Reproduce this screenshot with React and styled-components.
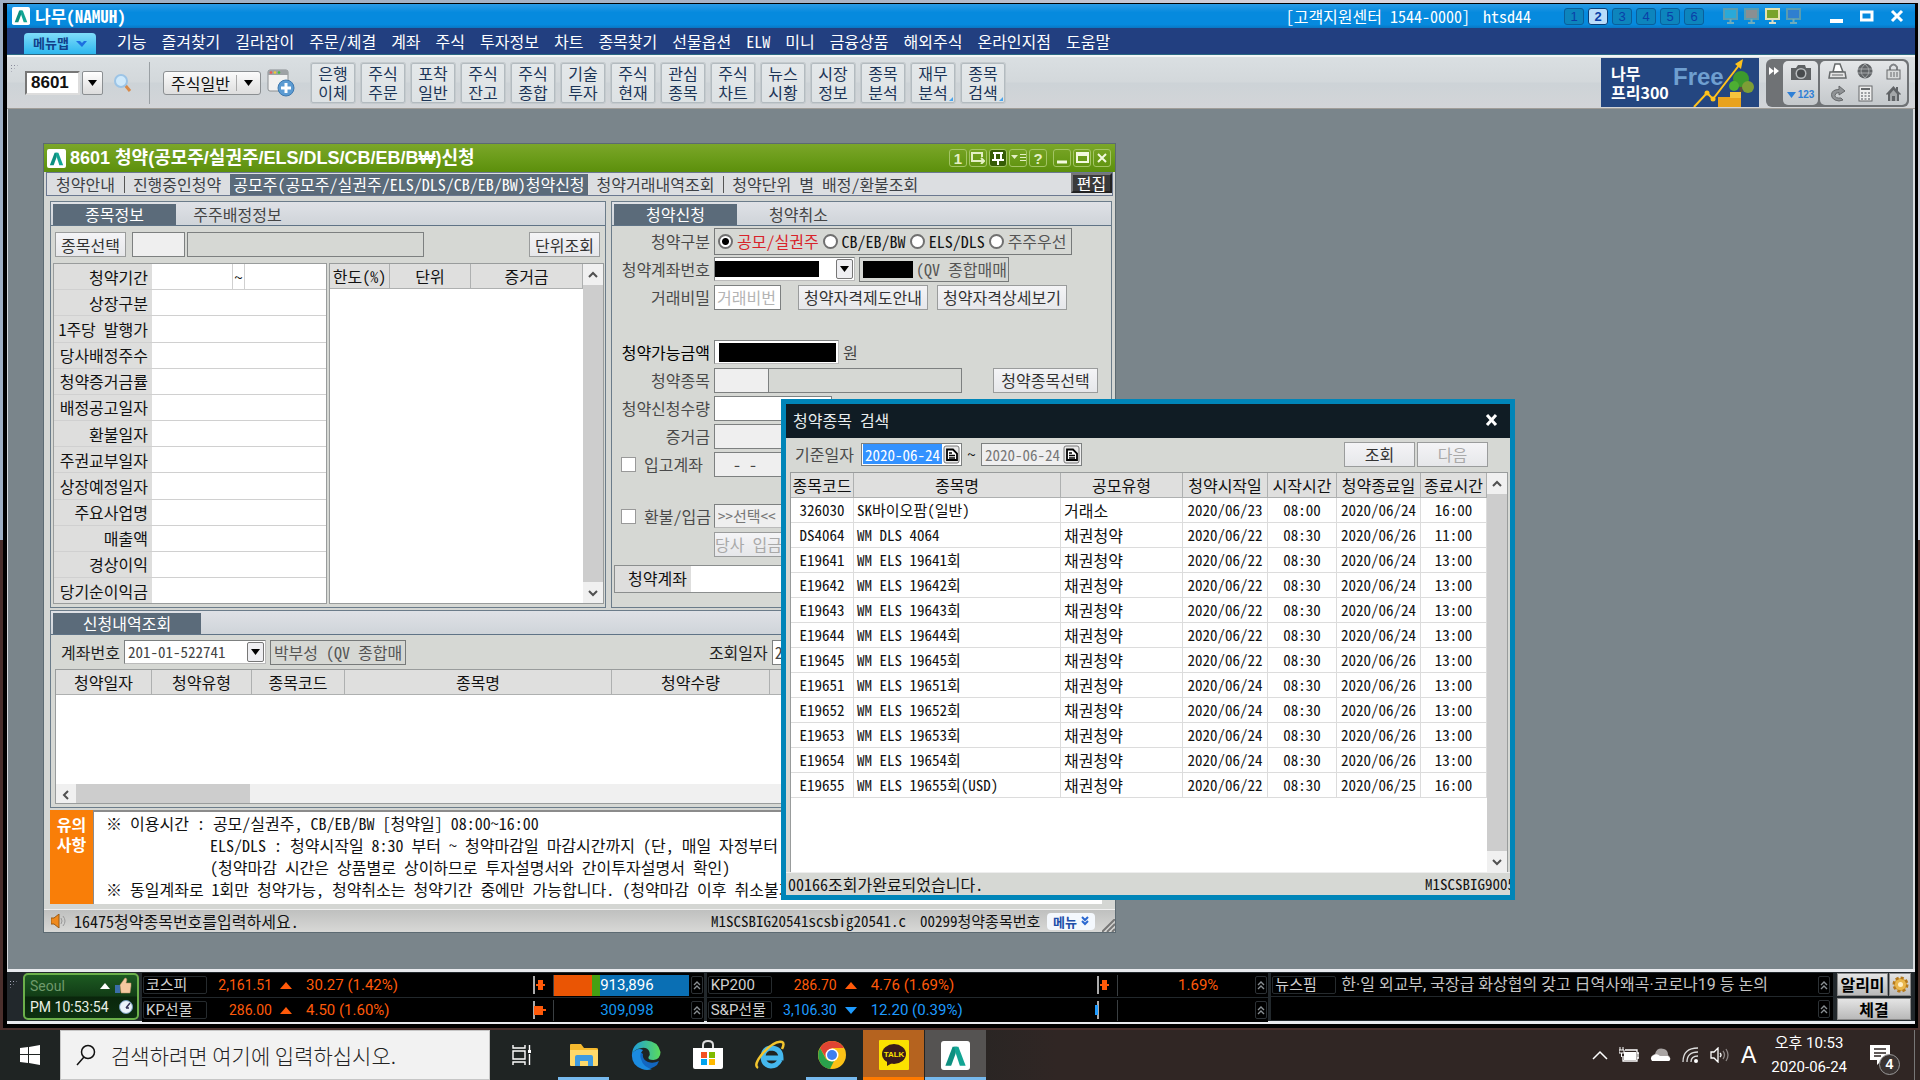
import React from 'react';
import styled, { createGlobalStyle, css } from 'styled-components';

// Fonts
const mono = "'Noto Sans Mono CJK KR', 'Noto Sans CJK KR', monospace";
const sans = "'Liberation Sans', 'Noto Sans CJK KR', sans-serif";
const roboto = "Roboto, 'Noto Sans CJK KR', sans-serif";

// Constants
const menus = [
    '기능', '즐겨찾기', '길라잡이', '주문/체결', '계좌', '주식', '투자정보', '차트', '종목찾기',
    '선물옵션', 'ELW', '미니', '금융상품', '해외주식', '온라인지점', '도움말',
];

const shortcuts = [
    ['은행', '이체'], ['주식', '주문'], ['포착', '일반'], ['주식', '잔고'], ['주식', '종합'],
    ['기술', '투자'], ['주식', '현재'], ['관심', '종목'], ['주식', '차트'], ['뉴스', '시황'],
    ['시장', '정보'], ['종목', '분석'], ['재무', '분석', true], ['종목', '검색', true],
];

const infoRows = [
    '상장구분', '1주당 발행가', '당사배정주수', '청약증거금률', '배정공고일자', '환불일자',
    '주권교부일자', '상장예정일자', '주요사업명', '매출액', '경상이익', '당기순이익금',
];

const results = [
    ['326030', 'SK바이오팜(일반)', '거래소', '2020/06/23', '08:00', '2020/06/24', '16:00'],
    ['DS4064', 'WM DLS 4064', '채권청약', '2020/06/22', '08:30', '2020/06/26', '11:00'],
    ['E19641', 'WM ELS 19641회', '채권청약', '2020/06/22', '08:30', '2020/06/24', '13:00'],
    ['E19642', 'WM ELS 19642회', '채권청약', '2020/06/22', '08:30', '2020/06/24', '13:00'],
    ['E19643', 'WM ELS 19643회', '채권청약', '2020/06/22', '08:30', '2020/06/24', '13:00'],
    ['E19644', 'WM ELS 19644회', '채권청약', '2020/06/22', '08:30', '2020/06/24', '13:00'],
    ['E19645', 'WM ELS 19645회', '채권청약', '2020/06/22', '08:30', '2020/06/26', '13:00'],
    ['E19651', 'WM ELS 19651회', '채권청약', '2020/06/24', '08:30', '2020/06/26', '13:00'],
    ['E19652', 'WM ELS 19652회', '채권청약', '2020/06/24', '08:30', '2020/06/26', '13:00'],
    ['E19653', 'WM ELS 19653회', '채권청약', '2020/06/24', '08:30', '2020/06/26', '13:00'],
    ['E19654', 'WM ELS 19654회', '채권청약', '2020/06/24', '08:30', '2020/06/26', '13:00'],
    ['E19655', 'WM ELS 19655회(USD)', '채권청약', '2020/06/22', '08:30', '2020/06/25', '16:00'],
];

const notice = `※ 이용시간 : 공모/실권주, CB/EB/BW [청약일] 08:00~16:00
             ELS/DLS : 청약시작일 8:30 부터 ~ 청약마감일 마감시간까지 (단, 매일 자정부터
             (청약마감 시간은 상품별로 상이하므로 투자설명서와 간이투자설명서 확인)
※ 동일계좌로 1회만 청약가능, 청약취소는 청약기간 중에만 가능합니다. (청약마감 이후 취소불가)`;

const Logo = ({ size }) => (
    <svg width={size} height={size} viewBox="0 0 20 20">
        <rect x="0" y="0" width="20" height="20" rx="2" fill="#fff" />
        <path d="M3 17L8 4h3l-1 5-3 8z" fill="#0d8f80" />
        <path d="M9 4h3l5 13h-4L10 8z" fill="#12a594" />
    </svg>
);

const Caret = ({ up, left, size = 10 }) => (
    <svg width={size} height={size} viewBox="0 0 10 10">
        <path
            d={left ? 'M7 1L3 5l4 4' : up ? 'M1 7l4-4 4 4' : 'M1 3l4 4 4-4'}
            fill="none"
            stroke="#505050"
            strokeWidth="2"
        />
    </svg>
);

const Drop = ({ color = '#000' }) => (
    <svg width="9" height="6" viewBox="0 0 9 6">
        <path d="M0 0h9L4.500 6z" fill={color} />
    </svg>
);

const Calendar = () => (
    <svg width="18" height="19" viewBox="0 0 18 19">
        <rect x="1" y="1" width="15" height="17" rx="2" fill="#e8e8e8" stroke="#777" />
        <path d="M4 4.500h6l4 4V15H4z" fill="#fff" stroke="#000" strokeWidth="1.800" />
        <path d="M6 8h3M6 10.500h6M6 13h6" stroke="#000" strokeWidth="1.300" />
    </svg>
);

const Chevrons = ({ color = '#8a9094', down }) => (
    <svg width="8" height="10" viewBox="0 0 8 10">
        <path
            d={down ? 'M1 1l3 3 3-3M1 5l3 3 3-3' : 'M1 5l3-3 3 3M1 9l3-3 3 3'}
            fill="none"
            stroke={color}
            strokeWidth={down ? 2 : 1.4}
        />
    </svg>
);

const ScrollV = () => (
    <ScrollColumn>
        <ScrollButton aria-label="위로"><Caret up /></ScrollButton>
        <Thumb />
        <ScrollButton aria-label="아래로"><Caret /></ScrollButton>
    </ScrollColumn>
);

const TitleBar = () => (
    <TitleBarWrapper>
        <Logo size={18} />
        <AppTitle>나무(NAMUH)</AppTitle>
        <TitleText>[고객지원센터 1544-0000]</TitleText>
        <TitleText>htsd44</TitleText>
        <Screens>
            {[1, 2, 3, 4, 5, 6].map(n => (
                <ScreenButton key={n} active={n === 2 ? 1 : 0}>{n}</ScreenButton>
            ))}
        </Screens>
        <Monitors>
            {['#29a9d8', '#8a8f92', '#7aa32a', '#2f7fd0'].map((color, i) => (
                <svg key={color} width="17" height="17" viewBox="0 0 17 17">
                    <rect x="2" y="1" width="13" height="10" fill={color} stroke={i === 2 ? '#e6e2b0' : '#5a9cb0'} strokeWidth="2" />
                    <path d="M8.500 11v4M5 15h7" stroke={i === 2 ? '#d8dcc8' : '#6fabbc'} strokeWidth="2" />
                </svg>
            ))}
        </Monitors>
        <WindowControls>
            <IconButton aria-label="최소화">
                <svg width="14" height="14"><path d="M0 12h13" stroke="#fff" strokeWidth="4" /></svg>
            </IconButton>
            <IconButton aria-label="최대화">
                <svg width="14" height="14"><rect x="1" y="3" width="11" height="8" fill="none" stroke="#fff" strokeWidth="3" /></svg>
            </IconButton>
            <IconButton aria-label="닫기">
                <svg width="14" height="14"><path d="M2 2l10 10M12 2L2 12" stroke="#fff" strokeWidth="3" /></svg>
            </IconButton>
        </WindowControls>
    </TitleBarWrapper>
);

const MenuBar = () => (
    <MenuWrapper>
        <MenuMap>메뉴맵 <svg width="11" height="7"><path d="M0 1h4l2 2 2-2h3L6 7z" fill="#1c6fe0" /></svg></MenuMap>
        {menus.map(m => <MenuItem key={m} href="#">{m}</MenuItem>)}
    </MenuWrapper>
);

const Banner = () => (
    <BannerLink href="#">
        <BannerText>나무<br />프리300</BannerText>
        <svg width="94" height="49" viewBox="0 0 94 49">
            <text x="8" y="27" fontFamily="Liberation Sans" fontWeight="bold" fontSize="24" fill="#6f9fd0">Free</text>
            <rect x="53" y="39" width="23" height="10" fill="#e9a21d" />
            <rect x="65" y="34" width="11" height="6" fill="#f6c33c" />
            <path d="M76 22v12" stroke="#5b4a3a" strokeWidth="3" />
            <circle cx="76" cy="21" r="8" fill="#3c9a2d" />
            <circle cx="69" cy="28" r="5" fill="#4dae33" />
            <circle cx="83" cy="29" r="6" fill="#7d9e36" />
            <path d="M29 49l13-14 6 6 27-35" fill="none" stroke="#ffc21c" strokeWidth="2" />
            <circle cx="42" cy="35" r="2.500" fill="#ffc21c" />
            <circle cx="48" cy="41" r="2.500" fill="#ffc21c" />
            <path d="M78 1l-8 5 6 5z" fill="#ffc21c" />
        </svg>
    </BannerLink>
);

const Dock = () => (
    <DockWrapper>
        <DockArrow width="11" height="9" viewBox="0 0 11 9"><path d="M0 0l5 4-5 4zM5 0l5 4-5 4z" fill="#fff" /></DockArrow>
        <DockPanel width={35}>
            <svg width="22" height="17" viewBox="0 0 22 17">
                <path d="M1 4h5l2-3h7l1 3h5v12H1z" fill="#5e6163" />
                <circle cx="11" cy="9.500" r="5.500" fill="#b9bcbe" />
                <circle cx="11" cy="9.500" r="4" fill="#484b4d" />
            </svg>
            <DockNumber><Drop color="#2f7fd6" />123</DockNumber>
        </DockPanel>
        <DockPanel width={87} wide={1}>
            <svg width="19" height="17" viewBox="0 0 19 17">
                <path d="M5 9L7 1h5l3 8z" fill="#fff" stroke="#66696b" strokeWidth="1.500" />
                <path d="M2 9h15l1 6H1z" fill="#e4e4e4" stroke="#66696b" strokeWidth="1.500" />
                <path d="M4 12h11" stroke="#66696b" />
            </svg>
            <svg width="17" height="17" viewBox="0 0 17 17">
                <circle cx="8" cy="8" r="7.500" fill="#606366" />
                <path d="M1 6h14M1 10h14M8 1q-8 7 0 14M8 1q8 7 0 14" stroke="#a4a7a9" fill="none" />
            </svg>
            <svg width="15" height="17" viewBox="0 0 15 17">
                <path d="M4 8V4q3.500-5 7 0v4" fill="none" stroke="#808386" strokeWidth="2" />
                <rect x="1" y="7" width="13" height="9" fill="#d8dada" stroke="#66696b" />
                <path d="M5 9v5M8 9v5M11 9v5" stroke="#66696b" />
            </svg>
            <svg width="16" height="17" viewBox="0 0 16 17">
                <path d="M9 1l6 5-6 4V7.500q-4 0-4 3t6 2.500l2 2q-4 2-8 0-4-2-3.500-5.500.5-5 7.500-5z" fill="#909396" stroke="#66696b" />
            </svg>
            <svg width="15" height="17" viewBox="0 0 15 17">
                <rect x="1" y="1" width="13" height="15" fill="#eee" stroke="#66696b" />
                <path d="M3 4h9" stroke="#66696b" strokeWidth="2" />
                <path d="M3 8h9M3 11h9M3 14h9" stroke="#808386" strokeWidth="1.500" strokeDasharray="2 1.500" />
            </svg>
            <svg width="17" height="17" viewBox="0 0 17 17">
                <path d="M8.500 1L1 9l1 1 1-1v7h11V9l1 1 1-1-3-3V2h-2v2z" fill="#606366" />
                <path d="M5 16V9l3.500-4L12 9v7h-2v-5H7v5z" fill="#a4a7a9" />
            </svg>
        </DockPanel>
    </DockWrapper>
);

const Toolbar = () => (
    <ToolbarWrapper>
        <Grip />
        <ScreenNo aria-label="화면번호" defaultValue="8601" />
        <ScreenNoDrop aria-label="화면번호 목록"><Drop /></ScreenNoDrop>
        <Search width="20" height="20" viewBox="0 0 20 20">
            <path d="M12 12l5 6" stroke="#d88a4a" strokeWidth="3" />
            <circle cx="8" cy="8" r="6" fill="#cfe9fb" stroke="#9cc4e6" strokeWidth="2" />
        </Search>
        <Divider />
        <Preset>
            주식일반
            <PresetLine />
            <Drop />
        </Preset>
        <NewWindow width="28" height="28" viewBox="0 0 28 28">
            <rect x="1" y="1" width="20" height="21" rx="2" fill="#f1f1f1" stroke="#8b8f92" />
            <path d="M1 3q0-2 2-2h16q2 0 2 2v3H1z" fill="#9ea2a5" />
            <circle cx="4" cy="3.500" r="1.300" fill="#e55" /><circle cx="8" cy="3.500" r="1.300" fill="#ec3" /><circle cx="12" cy="3.500" r="1.300" fill="#4b4" />
            <circle cx="19" cy="19" r="8" fill="#5b9bd3" stroke="#3f78ad" />
            <path d="M19 14v10M14 19h10" stroke="#fff" strokeWidth="3" />
        </NewWindow>
        <Shortcuts>
            {shortcuts.map(([a, b, more], i) => (
                <Shortcut key={i}>
                    {a}<br />{b}
                    {more && <Corner />}
                </Shortcut>
            ))}
        </Shortcuts>
        <Banner />
        <Dock />
    </ToolbarWrapper>
);

const StockInfo = () => (
    <Panel width={556}>
        <PanelTabs>
            <PanelTab active={1}>종목정보</PanelTab>
            <PanelTab>주주배정정보</PanelTab>
        </PanelTabs>
        <InfoTools>
            <Button width={71}>종목선택</Button>
            <FormGap width={2} />
            <Field aria-label="종목코드" width={53} soft={1} />
            <Field aria-label="종목명" width={237} readOnly flat={1} />
            <Spacer />
            <Button width={71}>단위조회</Button>
        </InfoTools>
        <InfoTables>
            <InfoTable>
                <colgroup><col width="98" /><col width="81" /><col width="12" /><col /></colgroup>
                <tbody>
                    <tr><th scope="row">청약기간</th><td /><td>~</td><td /></tr>
                    {infoRows.map(r => <tr key={r}><th scope="row">{r}</th><td colSpan="3" /></tr>)}
                </tbody>
            </InfoTable>
            <GridBox>
                <GridMain>
                    <Grid>
                        <colgroup><col width="60" /><col width="81" /><col /></colgroup>
                        <thead><tr><th>한도(%)</th><th>단위</th><th>증거금</th></tr></thead>
                    </Grid>
                </GridMain>
                <ScrollV />
            </GridBox>
        </InfoTables>
    </Panel>
);

const Subscribe = () => (
    <Panel>
        <PanelTabs>
            <PanelTab active={1}>청약신청</PanelTab>
            <PanelTab>청약취소</PanelTab>
        </PanelTabs>
        <FormBody>
            <FormRow>
                <FormLabel as="span">청약구분</FormLabel>
                <RadioGroup>
                    <Radio type="radio" name="kind" id="k1" defaultChecked /><RadioLabel htmlFor="k1" tone="#d8232a">공모/실권주</RadioLabel>
                    <Radio type="radio" name="kind" id="k2" /><RadioLabel htmlFor="k2">CB/EB/BW</RadioLabel>
                    <Radio type="radio" name="kind" id="k3" /><RadioLabel htmlFor="k3">ELS/DLS</RadioLabel>
                    <Radio type="radio" name="kind" id="k4" /><RadioLabel htmlFor="k4" tone="#555">주주우선</RadioLabel>
                </RadioGroup>
            </FormRow>
            <FormRow>
                <FormLabel htmlFor="acct">청약계좌번호</FormLabel>
                <Combo width={141}>
                    <Redacted width={104} height={16} />
                    <Select id="acct"><option /></Select>
                    <ComboArrow><Drop /></ComboArrow>
                </Combo>
                <ReadBox width={150}><Redacted width={50} height={17} />(QV 종합매매</ReadBox>
            </FormRow>
            <FormRow>
                <FormLabel htmlFor="pw">거래비밀</FormLabel>
                <Field id="pw" width={67} placeholder="거래비번" />
                <FormGap width={9} />
                <Button width={130}>청약자격제도안내</Button>
                <FormGap width={1} />
                <Button width={130}>청약자격상세보기</Button>
            </FormRow>
            <FormRow space={27}>
                <FormLabel as="span" strong={1}>청약가능금액</FormLabel>
                <Combo width={125}><FormGap width={4} /><Redacted width={117} height={19} /></Combo>
                <Won>원</Won>
            </FormRow>
            <FormRow>
                <FormLabel htmlFor="item">청약종목</FormLabel>
                <Joined>
                    <Field id="item" width={55} soft={1} />
                    <Field aria-label="청약종목명" width={194} flat={1} readOnly />
                </Joined>
                <Spacer />
                <Button width={105}>청약종목선택</Button>
                <FormGap width={6} />
            </FormRow>
            <FormRow>
                <FormLabel htmlFor="qty">청약신청수량</FormLabel>
                <Field id="qty" width={118} />
            </FormRow>
            <FormRow>
                <FormLabel htmlFor="deposit">증거금</FormLabel>
                <Field id="deposit" width={118} soft={1} />
            </FormRow>
            <FormRow>
                <CheckLabel><Check type="checkbox" />입고계좌</CheckLabel>
                <Field aria-label="입고계좌" width={142} soft={1} defaultValue="  - -" />
            </FormRow>
            <FormRow space={24}>
                <CheckLabel><Check type="checkbox" />환불/입금</CheckLabel>
                <Combo width={142} soft={1}>
                    <Select aria-label="환불/입금 은행" muted={1}><option>&gt;&gt;선택&lt;&lt;</option></Select>
                </Combo>
            </FormRow>
            <FormRow>
                <FormLabel as="span" />
                <Button width={142} disabled left={1}>당사 입금계좌</Button>
            </FormRow>
            <AccountBox>
                <AccountLabel htmlFor="acct2">청약계좌</AccountLabel>
                <AccountInput id="acct2" />
            </AccountBox>
        </FormBody>
    </Panel>
);

const History = () => (
    <Panel>
        <PanelTabs>
            <PanelTab active={1} wide={1}>신청내역조회</PanelTab>
        </PanelTabs>
        <HistoryTools>
            <HistoryLabel htmlFor="hist">계좌번호</HistoryLabel>
            <Combo width={142}>
                <Select id="hist"><option>201-01-522741</option></Select>
                <ComboArrow><Drop /></ComboArrow>
            </Combo>
            <ReadBox width={136}>박부성 (QV 종합매</ReadBox>
            <FormGap width={295} />
            <HistoryLabel htmlFor="histDate">조회일자</HistoryLabel>
            <Field id="histDate" width={100} defaultValue="2020-06-24" />
        </HistoryTools>
        <HistoryGrid>
            <Grid>
                <colgroup><col width="96" /><col width="100" /><col width="93" /><col width="267" /><col width="158" /><col /></colgroup>
                <thead>
                    <tr><th>청약일자</th><th>청약유형</th><th>종목코드</th><th>종목명</th><th>청약수량</th><th aria-label="증거금" /></tr>
                </thead>
            </Grid>
            <ScrollRow>
                <ScrollButton aria-label="왼쪽으로"><Caret left /></ScrollButton>
                <ThumbH />
            </ScrollRow>
        </HistoryGrid>
    </Panel>
);

const SubscriptionWindow = () => (
    <InnerWindow>
        <InnerTitle>
            <Logo size={19} />
            <InnerName>8601 청약(공모주/실권주/ELS/DLS/CB/EB/B₩)신청</InnerName>
            <InnerButton>1</InnerButton>
            <InnerButton aria-label="복사">
                <svg width="14" height="12"><path d="M8 9H1V1h10v4M6 9h6M10 6l3 3-3 3" fill="none" stroke="#e4efc4" strokeWidth="2" /></svg>
            </InnerButton>
            <InnerButton aria-label="고정" active={1}>
                <svg width="12" height="13"><path d="M1 1h10M3 1v6M9 1v6M0 8h12M6 8v5" fill="none" stroke="#fff" strokeWidth="2" /></svg>
            </InnerButton>
            <InnerButton aria-label="메뉴">
                <svg width="15" height="10"><path d="M0 2h7L3.500 6zM9 1h6v1H9zM9 4h6v1H9zM9 7h6v1H9z" fill="#e4efc4" /></svg>
            </InnerButton>
            <InnerButton>?</InnerButton>
            <FormGap width={2} />
            <InnerButton aria-label="최소화">
                <svg width="12" height="12"><path d="M1 10h10" stroke="#f3f9df" strokeWidth="3" /></svg>
            </InnerButton>
            <InnerButton aria-label="최대화">
                <svg width="13" height="12"><path d="M1 1h11v9H1zM1 3h11" fill="none" stroke="#f3f9df" strokeWidth="2" /></svg>
            </InnerButton>
            <InnerButton aria-label="닫기">
                <svg width="12" height="12"><path d="M2 2l8 8M10 2l-8 8" stroke="#f3f9df" strokeWidth="2" /></svg>
            </InnerButton>
        </InnerTitle>
        <TabBar>
            <TabLink href="#">청약안내</TabLink>
            <TabLine />
            <TabLink href="#">진행중인청약</TabLink>
            <TabLink href="#" active={1}>공모주(공모주/실권주/ELS/DLS/CB/EB/BW)청약신청</TabLink>
            <TabLink href="#">청약거래내역조회</TabLink>
            <TabLine />
            <TabLink href="#">청약단위 별 배정/환불조회</TabLink>
            <Spacer />
            <EditButton>편집</EditButton>
        </TabBar>
        <InnerBody>
            <PanelRow>
                <StockInfo />
                <Subscribe />
            </PanelRow>
            <History />
            <Notice>
                <NoticeMark>유의<br />사항</NoticeMark>
                <NoticeText>{notice}</NoticeText>
            </Notice>
        </InnerBody>
        <StatusBar>
            <svg width="16" height="14" viewBox="0 0 16 14">
                <path d="M0 4h3l5-4v14l-5-4H0z" fill="#f08a1d" stroke="#9a5a14" />
                <path d="M10 4q2 3 0 6M12 2q4 5 0 10" fill="none" stroke="#999" />
            </svg>
            <StatusText>16475청약종목번호를입력하세요.</StatusText>
            <StatusCode>M1SCSBIG20541scsbig20541.c</StatusCode>
            <StatusCode>00299청약종목번호</StatusCode>
            <StatusMenu>메뉴<Chevrons down color="#2a68d0" /></StatusMenu>
            <ResizeGrip width="13" height="13"><path d="M0 13L13 0M5 13l8-8M10 13l3-3" stroke="#777" strokeWidth="2" /></ResizeGrip>
        </StatusBar>
    </InnerWindow>
);

const SearchDialog = () => (
    <Dialog>
        <DialogTitle>
            청약종목 검색
            <IconButton aria-label="닫기">
                <svg width="13" height="12"><path d="M2 1l9 10M11 1L2 11" stroke="#fff" strokeWidth="3" /></svg>
            </IconButton>
        </DialogTitle>
        <DialogTools>
            <DialogLabel htmlFor="from">기준일자</DialogLabel>
            <DateBox>
                <DateInput id="from" defaultValue="2020-06-24" selected={1} /><Calendar />
            </DateBox>
            <Tilde>~</Tilde>
            <DateBox soft={1}>
                <DateInput aria-label="종료일자" defaultValue="2020-06-24" /><Calendar />
            </DateBox>
            <Spacer />
            <Button width={71}>조회</Button>
            <Button width={71} disabled>다음</Button>
        </DialogTools>
        <DialogGrid>
            <GridMain>
                <ResultTable>
                    <colgroup><col width="63" /><col /><col width="122" /><col width="85" /><col width="69" /><col width="84" /><col width="66" /></colgroup>
                    <thead>
                        <tr>
                            <th>종목코드</th><th>종목명</th><th>공모유형</th><th>청약시작일</th>
                            <th>시작시간</th><th>청약종료일</th><th>종료시간</th>
                        </tr>
                    </thead>
                    <tbody>
                        {results.map(row => (
                            <tr key={row[0]}>{row.map((cell, i) => <td key={i}>{cell}</td>)}</tr>
                        ))}
                    </tbody>
                </ResultTable>
            </GridMain>
            <ScrollV />
        </DialogGrid>
        <DialogStatus>
            <span>00166조회가완료되었습니다.</span>
            <DialogCode>M1SCSBIG9005</DialogCode>
        </DialogStatus>
    </Dialog>
);

const Quote = ({ name, value, change, down, volume, volumeColor, bar, candle }) => (
    <QuoteRow down={down}>
        <QuoteName>{name}</QuoteName>
        <QuoteValue>{value}</QuoteValue>
        <svg width="12" height="7" viewBox="0 0 12 7">
            <path d={down ? 'M0 0h12L6 7z' : 'M0 7h12L6 0z'} fill="currentColor" />
        </svg>
        <Change>{change}</Change>
        <Candle width="24" height="24" viewBox="0 0 24 24">
            <path d="M5 3v18" stroke="#e4e4e4" strokeWidth="1.500" />
            {down
                ? <rect x="2" y="7" width="3" height="10" fill="currentColor" />
                : <path d={candle ? 'M5 8h9v3h3v2h-3v4H5z' : 'M7 11h2V7h5v4h2v2h-2v4H9v-4H7z'} fill="currentColor" />}
        </Candle>
        <Volume bar={bar} tone={volumeColor}>{volume}</Volume>
        <Expand aria-label="펼치기"><Chevrons /></Expand>
    </QuoteRow>
);

const Ticker = () => (
    <TickerWrapper>
        <Grip dark={1} />
        <Seoul>
            <SeoulRow tone="#6f9a6b">
                Seoul<Spacer />
                <svg width="10" height="6"><path d="M0 6h10L5 0z" fill="#fff" /></svg>
                <svg width="17" height="17" viewBox="0 0 17 17">
                    <path d="M5 8l5-7q3 0 1 5h5v3l-1 7H6z" fill="#f5c9a0" stroke="#b98c63" strokeWidth=".5" />
                    <rect x="0" y="8" width="5" height="8" fill="#3b6ea8" />
                </svg>
            </SeoulRow>
            <SeoulRow tone="#e9f0e4">
                PM 10:53:54<Spacer />
                <svg width="15" height="15" viewBox="0 0 15 15">
                    <circle cx="7" cy="7" r="6.500" fill="#eaf3fa" stroke="#6f97b8" />
                    <path d="M7 8l4-5M7 8h3" stroke="#335" strokeWidth="1.500" />
                </svg>
            </SeoulRow>
        </Seoul>
        <QuoteGroup>
            <Quote name="코스피" value="2,161.51" change="30.27 (1.42%)" volume="913,896" volumeColor="#fff" bar={1} />
            <Quote name="KP선물" value="286.00" change="4.50 (1.60%)" volume="309,098" volumeColor="#1497f0" candle={1} />
        </QuoteGroup>
        <QuoteGroup>
            <Quote name="KP200" value="286.70" change="4.76 (1.69%)" volume="1.69%" />
            <Quote name="S&P선물" value="3,106.30" change="12.20 (0.39%)" down={1} />
        </QuoteGroup>
        <QuoteGroup>
            <NewsRow>
                <QuoteName>뉴스핌</QuoteName>
                <Headline>한·일 외교부, 국장급 화상협의 갖고 日역사왜곡·코로나19 등 논의</Headline>
                <Expand aria-label="뉴스 펼치기"><Chevrons /></Expand>
            </NewsRow>
            <NewsRow>
                <Spacer />
                <Expand aria-label="펼치기"><Chevrons /></Expand>
            </NewsRow>
        </QuoteGroup>
        <Alerts>
            <AlertButton>알리미</AlertButton>
            <AlertButton aria-label="설정">
                <svg width="17" height="17" viewBox="0 0 17 17">
                    <circle cx="8.500" cy="8.500" r="6.500" fill="#dba233" stroke="#b5791c" strokeWidth="3" strokeDasharray="3 2" />
                    <circle cx="8.500" cy="8.500" r="5.500" fill="#e9b64c" />
                    <circle cx="8.500" cy="8.500" r="2.500" fill="#fff0c8" />
                </svg>
            </AlertButton>
            <AlertButton full={1}>체결</AlertButton>
        </Alerts>
    </TickerWrapper>
);

const Taskbar = () => (
    <TaskbarWrapper>
        <StartButton aria-label="시작">
            <svg width="20" height="20" viewBox="0 0 20 20">
                <path d="M0 3l8-1v7H0zM9 2l11-2v9H9zM0 10h8v8l-8-1zM9 10h11v10L9 18z" fill="#fff" />
            </svg>
        </StartButton>
        <SearchBox>
            <svg width="22" height="22" viewBox="0 0 22 22">
                <circle cx="13" cy="8" r="6.500" fill="none" stroke="#111" strokeWidth="1.500" />
                <path d="M9 13l-7 8" stroke="#111" strokeWidth="1.500" />
            </svg>
            <SearchInput aria-label="검색" placeholder="검색하려면 여기에 입력하십시오." />
        </SearchBox>
        <TaskButton aria-label="작업 보기">
            <svg width="20" height="20" viewBox="0 0 20 20">
                <path d="M1 0v3h12V0M1 20v-3h12v3M1 6h12v8H1zM17.500 0v5M17.500 9v11" fill="none" stroke="#fff" strokeWidth="1.400" />
                <rect x="16" y="5" width="3" height="3" fill="#fff" />
            </svg>
        </TaskButton>
        <TaskButton aria-label="파일 탐색기" line="#76b9ed">
            <svg width="28" height="24" viewBox="0 0 28 24">
                <path d="M0 2q0-1 1-1h10l3 4h12q2 0 2 1v16H0z" fill="#f5b92e" />
                <path d="M0 7h28v15q0 1-1 1H1q-1 0-1-1z" fill="#ffd96a" />
                <path d="M5 23v-9q0-2 2-2h14q2 0 2 2v9h-5v-5h-8v5z" fill="#3f9be0" />
            </svg>
        </TaskButton>
        <TaskButton aria-label="Edge">
            <svg width="30" height="30" viewBox="0 0 30 30">
                <defs>
                    <linearGradient id="eg" x1="0" x2="1"><stop offset="0" stopColor="#1c9bdc" /><stop offset="1" stopColor="#5bdc5a" /></linearGradient>
                </defs>
                <path d="M1 13Q2 22 8 27q9 5 18-2l2-4q-6 3-11 1-6-3-5-8-6-6-11-1z" fill="#1266c0" />
                <path d="M1 14Q2 2 15 .5 27 1 29.500 12q0 7-7 8-6 0-5-3 2-2 1-5-2-5-8-4-7 1-9.500 6z" fill="url(#eg)" />
                <path d="M1 14q5-7 11-4-4 4-2 9 2 8 11 10-5 2-10 0Q0 25 1 14z" fill="#1b8be0" />
            </svg>
        </TaskButton>
        <TaskButton aria-label="Store">
            <svg width="30" height="30" viewBox="0 0 30 30">
                <path d="M10 9V5q0-4 5-4t5 4v4" fill="none" stroke="#ddd" strokeWidth="2" />
                <path d="M0 8h30v19q0 2-2 2H2q-2 0-2-2z" fill="#fff" />
                <path d="M8 12h6v6H8z" fill="#f25022" /><path d="M16 12h6v6h-6z" fill="#7fba00" />
                <path d="M8 19h6v6H8z" fill="#00a4ef" /><path d="M16 19h6v6h-6z" fill="#ffb900" />
            </svg>
        </TaskButton>
        <TaskButton aria-label="Internet Explorer">
            <svg width="30" height="30" viewBox="0 0 30 30">
                <path d="M25 20q-3 6-9 6-8-1-8-10 1-8 9-8 9 1 9 10H10" fill="none" stroke="#45b8ee" strokeWidth="5" />
                <path d="M3 28Q-2 25 8 13 20 0 27 2q3 1 0 7" fill="none" stroke="#f3c62f" strokeWidth="2.500" />
            </svg>
        </TaskButton>
        <TaskButton aria-label="Chrome" line="#76b9ed">
            <svg width="28" height="28" viewBox="0 0 28 28">
                <circle cx="14" cy="14" r="14" fill="#fbc116" />
                <path d="M2 7Q6 0 14 0t12 7H14L8 17z" fill="#e04433" />
                <path d="M2 7l6 11q3 3 8 2l-4 8Q4 27 1 19-1 13 2 7z" fill="#2aa24c" />
                <circle cx="14" cy="14" r="6.500" fill="#fff" /><circle cx="14" cy="14" r="5" fill="#3f7fee" />
            </svg>
        </TaskButton>
        <TaskButton aria-label="KakaoTalk" wide={1} fill="#b5631f" line="#ff7a00">
            <svg width="30" height="30" viewBox="0 0 30 30">
                <rect width="30" height="30" rx="1" fill="#fbe100" />
                <ellipse cx="15" cy="14" rx="12" ry="10" fill="#391b1b" />
                <path d="M8 20v6l7-4z" fill="#391b1b" />
                <text x="15" y="17" textAnchor="middle" fontFamily="Liberation Sans" fontWeight="bold" fontSize="8" fill="#fbe100">TALK</text>
            </svg>
        </TaskButton>
        <TaskButton aria-label="나무" wide={1} fill="#555352" line="#76b9ed"><Logo size={29} /></TaskButton>
        <Spacer />
        <Tray>
            <svg width="16" height="10"><path d="M1 9l7-7 7 7" fill="none" stroke="#fff" strokeWidth="1.500" /></svg>
            <svg width="20" height="16" viewBox="0 0 20 16">
                <path d="M5 5h12v8H5z" fill="#fff" /><path d="M6 3h12v11H4V9M18 6h2v5h-2" fill="none" stroke="#fff" strokeWidth="1.300" />
                <path d="M1 0v3M4 0v3M0 3h5v3H0zM2.500 6v4" fill="none" stroke="#fff" />
            </svg>
            <svg width="21" height="14" viewBox="0 0 21 14">
                <path d="M3 12q-4-4 2-6 2-7 9-5 4 1 4 6 4 3 1 6z" fill="#a9a4a3" />
                <path d="M2 13q-3-4 2-6 3-2 6 1l8 0q4 3 1 5z" fill="#fff" />
            </svg>
            <svg width="17" height="16" viewBox="0 0 17 16">
                <path d="M1 15Q1 1 16 1M5 15Q5 5 16 5M9 15q0-6 7-6" fill="none" stroke="#ddd" strokeWidth="1.300" />
                <circle cx="14" cy="14" r="2" fill="#fff" />
            </svg>
            <svg width="20" height="16" viewBox="0 0 20 16">
                <path d="M1 5h3l4-4v14l-4-4H1zM10 6q2 2 0 4" fill="none" stroke="#fff" strokeWidth="1.300" />
                <path d="M13 4q3 4 0 8M16 2q4 6 0 12" fill="none" stroke="#8c8685" strokeWidth="1.300" />
            </svg>
            <Ime>A</Ime>
        </Tray>
        <Clock>오후 10:53<br />2020-06-24</Clock>
        <ActionCenter aria-label="알림 센터">
            <svg width="21" height="20" viewBox="0 0 21 20">
                <path d="M0 0h20v15H12l-5 5v-5H0z" fill="#fff" />
                <path d="M4 4h12M4 8h12M4 11h7" stroke="#2c2423" strokeWidth="1.300" />
            </svg>
            <Badge>4</Badge>
        </ActionCenter>
    </TaskbarWrapper>
);

const App = () => (
    <Desktop>
        <GlobalStyle />
        <AppWindow>
            <TitleBar />
            <MenuBar />
            <Toolbar />
            <Workspace>
                <SubscriptionWindow />
                <SearchDialog />
            </Workspace>
            <Ticker />
        </AppWindow>
        <Taskbar />
    </Desktop>
);

export default App;

const GlobalStyle = createGlobalStyle`
    * { box-sizing: border-box; }
    body { margin: 0; overflow: hidden; }
    svg { display: block; flex: none; }
    button, input, select { font: inherit; color: inherit; border-radius: 0; margin: 0; min-width: 0; }
    button { padding: 0; }
    a { color: inherit; text-decoration: none; }
`;

const Desktop = styled.div`
    height: 100vh;
    display: flex;
    flex-direction: column;
    padding: 3px 2px 0 3px;
    font: 16px/18px ${mono};
    color: #111;
    white-space: nowrap;
    background: linear-gradient(#0000 0 50%, #4a2f2c 50%), linear-gradient(90deg, #9fb0c4, #aab4c6 45%, #ddd6de 70%, #cfd0dc);
`;

const AppWindow = styled.div`
    flex: 1;
    min-height: 0;
    display: flex;
    flex-direction: column;
    border: solid #000;
    border-width: 1px 3px 4px 4px;
    margin-bottom: 2px;
    background: #d6dadd;
`;

const Spacer = styled.span`
    flex: 1;
`;

const TitleBarWrapper = styled.header`
    height: 24px;
    flex: none;
    display: flex;
    align-items: center;
    padding: 0 11px 0 5px;
    color: #fff;
    background: linear-gradient(#2a9be6, #068ade 35%, #068ade 85%, #0a76c4);
`;

const AppTitle = styled.h1`
    flex: 1;
    margin: 0 0 0 5px;
    font-size: 17px;
    font-weight: bold;
`;

const TitleText = styled.span`
    margin-right: 13px;
`;

const Screens = styled.div`
    display: flex;
    gap: 4px;
    margin-left: 20px;
`;

const ScreenButton = styled.button`
    width: 20px;
    height: 17px;
    font: 13px/13px ${sans};
    border: 1px solid #0a5f9c;
    border-radius: 3px;
    color: #0a3fa8;
    background: #0d85bd;
    ${p => p.active && css`
        border-color: #0b3f78;
        background: #b9dcfa;
        font-weight: bold;
    `}
`;

const Monitors = styled.div`
    display: flex;
    gap: 4px;
    margin: 0 28px 0 18px;
`;

const WindowControls = styled.div`
    display: flex;
    gap: 16px;
`;

const IconButton = styled.button`
    border: 0;
    background: none;
`;

const MenuWrapper = styled.nav`
    height: 27px;
    flex: none;
    display: flex;
    align-items: center;
    gap: 15px;
    padding-left: 17px;
    color: #fff;
    background: #223f80;
    border-bottom: 1px solid #2c6a84;
`;

const MenuMap = styled.button`
    width: 72px;
    height: 21px;
    margin: 4px 6px 0 0;
    display: flex;
    align-items: center;
    justify-content: center;
    gap: 7px;
    border: 0;
    border-radius: 4px 4px 0 0;
    font-size: 13px;
    font-weight: bold;
    color: #12408a;
    background: linear-gradient(#7fdcfa, #2cb6ee);
`;

const MenuItem = styled.a``;

const ToolbarWrapper = styled.div`
    height: 54px;
    flex: none;
    display: flex;
    align-items: center;
    border-top: 2px solid #f4f6f7;
    border-bottom: 1px solid #a09d98;
    padding: 0 6px 0 3px;
    background: linear-gradient(#dadfe2, #d3d8db 48%, #cdd3d7 52%, #d3d5d8);
`;

const Grip = styled.i`
    width: 9px;
    height: 9px;
    flex: none;
    align-self: flex-start;
    margin: 7px 6px 0 0;
    background: radial-gradient(circle, ${p => (p.dark ? '#aab' : '#889')} 0 1px, #0000 1px) 0 0 / 3px 3px;
    clip-path: polygon(0 0, 100% 0, 0 100%);
    ${p => p.dark && css`margin: 7px 2px 0 2px;`}
`;

const ScreenNo = styled.input`
    width: 55px;
    height: 24px;
    padding: 0 4px;
    font: bold 17px/20px ${sans};
    border: 2px solid #777;
    border-right-color: #ddd;
    border-bottom-color: #ddd;
    background: #fff;
`;

const ScreenNoDrop = styled.button`
    width: 21px;
    height: 24px;
    margin-left: 2px;
    display: flex;
    align-items: center;
    justify-content: center;
    border: 1px solid #8b8f92;
    border-radius: 2px;
    background: linear-gradient(#fff, #dcdcdc);
`;

const Search = styled.svg`
    margin-left: 10px;
`;

const Divider = styled.i`
    width: 1px;
    height: 42px;
    margin: 0 13px 0 16px;
    background: #9aa0a4;
`;

const Preset = styled.button`
    width: 98px;
    height: 24px;
    padding: 0 7px 0 7px;
    display: flex;
    align-items: center;
    justify-content: space-between;
    border: 1px solid #8b8f92;
    border-radius: 3px;
    background: linear-gradient(#fbfbfb, #dedede);
`;

const PresetLine = styled.i`
    width: 1px;
    height: 16px;
    background: #aaa;
`;

const NewWindow = styled.svg`
    margin-left: 6px;
`;

const Shortcuts = styled.div`
    flex: 1;
    display: flex;
    gap: 6px;
    margin-left: 16px;
`;

const Shortcut = styled.button`
    position: relative;
    width: 44px;
    height: 40px;
    line-height: 19px;
    color: #1c3557;
    border: 1px solid #b3bbc0;
    border-radius: 2px;
    box-shadow: 0 0 0 1px #c4cacd;
    background: linear-gradient(#e4e8ea, #dde2e4);
`;

const Corner = styled.i`
    position: absolute;
    right: 1px;
    bottom: 1px;
    border: 2px solid #4aa5ee;
    border-top-color: #0000;
    border-left-color: #0000;
`;

const BannerLink = styled.a`
    width: 158px;
    height: 49px;
    display: flex;
    align-items: center;
    overflow: hidden;
    color: #fff;
    background: #244680;
`;

const BannerText = styled.span`
    width: 64px;
    padding-left: 10px;
    font: bold 16px/19px 'Liberation Sans Narrow', 'Noto Sans CJK KR', sans-serif;
`;

const DockWrapper = styled.div`
    display: flex;
    gap: 2px;
    margin-left: 7px;
    padding: 2px;
    border-radius: 6px;
    background: #6f7275;
`;

const DockArrow = styled.svg`
    margin: 6px 1px 0 1px;
`;

const DockPanel = styled.div`
    width: ${p => p.width}px;
    height: 44px;
    display: grid;
    grid-template-columns: ${p => (p.wide ? '1fr 1fr 1fr' : '1fr')};
    place-items: center;
    padding-left: ${p => (p.wide ? 4 : 0)}px;
    border-radius: 5px;
    background: linear-gradient(#e4e6e8, #c4c8cb);
`;

const DockNumber = styled.span`
    display: flex;
    align-items: center;
    gap: 2px;
    font: bold 10px/12px ${sans};
    color: #2f7fd6;
`;

const Workspace = styled.main`
    flex: 1;
    min-height: 0;
    position: relative;
    margin: 0 2px 0 1px;
    background: #7a858b;
`;

const InnerWindow = styled.section`
    position: absolute;
    left: 35px;
    top: 34px;
    width: 1073px;
    border: 1px solid #5c6a72;
    background: #d4d6d3;
`;

const InnerTitle = styled.div`
    height: 28px;
    display: flex;
    align-items: center;
    gap: 2px;
    padding: 0 4px 0 3px;
    color: #fff;
    background: linear-gradient(#7ba629, #6b9c1a 50%, #5c8f0c);
`;

const InnerName = styled.h2`
    flex: 1;
    margin: 0 0 0 2px;
    font: bold 18px/20px ${sans};
`;

const InnerButton = styled.button`
    width: 18px;
    height: 18px;
    display: flex;
    align-items: center;
    justify-content: center;
    font: bold 15px/15px ${sans};
    color: #e4efc4;
    border: 1px solid #a3c465;
    border-radius: 3px;
    background: ${p => (p.active ? '#355c05' : 'none')};
`;

const TabBar = styled.nav`
    height: 24px;
    display: flex;
    align-items: stretch;
    margin: 0 2px;
    border: 1px solid #6b7890;
    color: #3d4146;
    background: #dcdee1;
`;

const TabLink = styled.a`
    padding: 1px 9px 0;
    line-height: 20px;
    ${p => p.active && css`
        padding: 0 3px;
        margin-top: 1px;
        color: #fff;
        background: #5b6b7a;
    `}
`;

const TabLine = styled.i`
    width: 1px;
    height: 17px;
    margin: 3px -1px 0 0;
    background: #555;
`;

const EditButton = styled.button`
    width: 41px;
    height: 20px;
    line-height: 16px;
    color: #fff;
    border: 2px outset #777;
    background: #3a3a3a;
`;

const InnerBody = styled.div`
    display: flex;
    flex-direction: column;
    gap: 2px;
    padding: 5px 3px 5px 6px;
`;

const PanelRow = styled.div`
    display: flex;
    gap: 5px;
`;

const Panel = styled.section`
    ${p => (p.width ? `width: ${p.width}px;` : 'flex: 1;')}
    min-width: 0;
    display: flex;
    flex-direction: column;
    border: 1px solid #6b7c8a;
    background: #d6d8d4;
`;

const PanelTabs = styled.div`
    height: 24px;
    display: flex;
    padding: 2px 2px 0;
    border-bottom: 1px solid #5f7386;
    background: linear-gradient(#dfe1e6, #cfd4d9);
`;

const PanelTab = styled.button`
    width: ${p => (p.wide ? 148 : 123)}px;
    line-height: 19px;
    border: 0;
    color: #444;
    background: ${p => (p.active ? '#5b6b7a' : 'none')};
    ${p => p.active && 'color: #fff;'}
`;

const InfoTools = styled.div`
    display: flex;
    gap: 2px;
    padding: 6px 5px 6px 4px;
`;

const Button = styled.button`
    width: ${p => p.width}px;
    height: 25px;
    flex: none;
    overflow: hidden;
    line-height: 20px;
    text-align: ${p => (p.left ? 'left' : 'center')};
    color: #333;
    border: 1px solid #9a9c9c;
    background: linear-gradient(#f4f4f6, #e6e7ea);
    &:disabled { color: #a9a9a9; }
`;

const Field = styled.input`
    width: ${p => p.width}px;
    height: 25px;
    padding: 0 2px;
    color: #444;
    border: 1px solid #7d8080;
    background: ${p => (p.flat ? '#d6d8d4' : p.soft ? '#efefef' : '#fff')};
    &::placeholder { color: #b4b4b4; }
`;

const InfoTables = styled.div`
    display: flex;
    align-items: flex-start;
    gap: 2px;
    padding: 0 1px 0 2px;
`;

const InfoTable = styled.table`
    width: 274px;
    height: 341px;
    table-layout: fixed;
    border-collapse: separate;
    border-spacing: 0;
    border: 1px solid #999c9c;
    background: #fff;
    th, td {
        padding: 0;
        border-bottom: 1px solid #d0d0d0;
        font-weight: normal;
        line-height: 18px;
    }
    th {
        padding-right: 4px;
        text-align: right;
        background: #dededd;
    }
    td {
        text-align: center;
        border-right: 1px solid #d0d0d0;
    }
    td:last-child { border-right: 0; }
    tr:last-child > * { border-bottom: 0; }
`;

const GridBox = styled.div`
    flex: 1;
    height: 341px;
    display: flex;
    border: 1px solid #999c9c;
    background: #fff;
`;

const GridMain = styled.div`
    flex: 1;
    min-width: 0;
`;

const Grid = styled.table`
    width: 100%;
    table-layout: fixed;
    border-collapse: separate;
    border-spacing: 0;
    th {
        height: 25px;
        padding: 0;
        font-weight: normal;
        border: solid #aeb0b0;
        border-width: 0 1px 1px 0;
        background: #dfdfde;
    }
`;

const ResultTable = styled(Grid)`
    td {
        height: 25px;
        padding: 0;
        font-size: 15px;
        text-align: center;
        border: solid #dcdcdc;
        border-width: 0 1px 1px 0;
    }
    td:nth-child(2), td:nth-child(3) {
        padding-left: 3px;
        text-align: left;
    }
    td:nth-child(3) { font-size: 16px; }
`;

const ScrollColumn = styled.div`
    width: 20px;
    display: flex;
    flex-direction: column;
    background: #f0f0f0;
`;

const ScrollButton = styled.button`
    width: 20px;
    height: 21px;
    display: flex;
    align-items: center;
    justify-content: center;
    border: 0;
    background: #f0f0f0;
`;

const Thumb = styled.i`
    flex: 1;
    background: #cdcdcd;
`;

const ThumbH = styled.i`
    width: 174px;
    background: #cdcdcd;
`;

const FormBody = styled.div`
    padding: 1px 0 0 1px;
`;

const FormRow = styled.div`
    height: 28px;
    display: flex;
    align-items: center;
    gap: 4px;
    margin-top: ${p => p.space || 0}px;
    padding-right: 3px;
`;

const FormLabel = styled.label`
    width: 97px;
    flex: none;
    text-align: right;
    color: ${p => (p.strong ? '#000' : '#4a4a4a')};
`;

const CheckLabel = styled.label`
    width: 99px;
    margin-right: -2px;
    padding-left: 8px;
    flex: none;
    display: flex;
    align-items: center;
    gap: 8px;
    color: #4a4a4a;
`;

const Check = styled.input`
    appearance: none;
    width: 15px;
    height: 15px;
    flex: none;
    border: 1px solid #999;
    background: #fff;
`;

const RadioGroup = styled.div`
    width: 358px;
    height: 27px;
    display: flex;
    align-items: center;
    padding-left: 3px;
    border: 1px solid #777a7a;
`;

const Radio = styled.input`
    appearance: none;
    width: 15px;
    height: 15px;
    flex: none;
    border: 2px solid #707070;
    border-radius: 50%;
    background: #fff;
    &:checked { background: radial-gradient(#000 0 3px, #fff 4px); }
`;

const RadioLabel = styled.label`
    padding: 0 4px;
    color: ${p => p.tone || '#111'};
`;

const Combo = styled.div`
    width: ${p => p.width}px;
    height: 24px;
    flex: none;
    display: flex;
    align-items: center;
    border: 1px solid #7d8080;
    border-right-color: #bbb;
    border-bottom-color: #bbb;
    background: ${p => (p.soft ? '#efefef' : '#fff')};
`;

const Select = styled.select`
    appearance: none;
    flex: 1;
    min-width: 0;
    height: 20px;
    padding: 0 3px;
    border: 0;
    font-size: 15px;
    color: ${p => (p.muted ? '#777' : '#444')};
    background: none;
`;

const ComboArrow = styled.span`
    width: 17px;
    height: 20px;
    margin-right: 1px;
    flex: none;
    display: flex;
    align-items: center;
    justify-content: center;
    pointer-events: none;
    border: 1px solid #777;
    border-radius: 2px;
    background: #efeff2;
`;

const Redacted = styled.i`
    width: ${p => p.width}px;
    height: ${p => p.height}px;
    flex: none;
    background: #000;
`;

const ReadBox = styled.output`
    width: ${p => p.width}px;
    height: 25px;
    flex: none;
    display: flex;
    align-items: center;
    gap: 3px;
    padding-left: 3px;
    overflow: hidden;
    color: #555;
    border: 1px solid #777a7a;
`;

const FormGap = styled.span`
    width: ${p => p.width}px;
    flex: none;
`;

const Won = styled.span`
    color: #444;
`;

const Joined = styled.div`
    display: flex;
    input + input { margin-left: -1px; }
`;

const AccountBox = styled.div`
    height: 28px;
    display: flex;
    margin: 7px 3px 14px 1px;
    border: 1px solid #8b8e8e;
    background: #fff;
`;

const AccountLabel = styled.label`
    width: 76px;
    line-height: 25px;
    padding-right: 4px;
    text-align: right;
    background: #dededd;
`;

const AccountInput = styled.input`
    flex: 1;
    border: 0;
`;

const HistoryTools = styled.div`
    height: 34px;
    display: flex;
    align-items: center;
    gap: 4px;
    padding-left: 10px;
`;

const HistoryLabel = styled.label`
    color: #222;
`;

const HistoryGrid = styled.div`
    height: 135px;
    display: flex;
    flex-direction: column;
    justify-content: space-between;
    margin: 0 3px 3px 4px;
    border: 1px solid #999c9c;
    background: #fff;
`;

const ScrollRow = styled.div`
    height: 19px;
    display: flex;
    overflow: hidden;
    background: #f0f0f0;
`;

const Notice = styled.div`
    height: 94px;
    display: flex;
    margin-right: 10px;
`;

const NoticeMark = styled.strong`
    width: 43px;
    padding-top: 4px;
    text-align: center;
    line-height: 20px;
    color: #fff;
    background: #f97e08;
`;

const NoticeText = styled.p`
    flex: 1;
    margin: 0;
    padding: 0 0 0 12px;
    overflow: hidden;
    white-space: pre;
    line-height: 22px;
    border-top: 2px solid #8b8b8b;
    border-left: 1px solid #8b8b8b;
    background: #fff;
`;

const StatusBar = styled.footer`
    position: relative;
    height: 23px;
    display: flex;
    align-items: center;
    padding: 0 20px 0 7px;
    border-top: 1px solid #f0f0f0;
    background: linear-gradient(#bfc0bf, #d8d8d6);
`;

const StatusText = styled.span`
    width: 644px;
    padding-left: 7px;
`;

const StatusCode = styled.span`
    margin-right: 14px;
    font-size: 15px;
    & + & {
        flex: 1;
        margin-right: 0;
    }
`;

const StatusMenu = styled.button`
    width: 48px;
    height: 17px;
    display: flex;
    align-items: center;
    justify-content: center;
    gap: 4px;
    border: 0;
    border-radius: 4px;
    font-size: 13px;
    line-height: 15px;
    font-weight: bold;
    color: #1e4ea8;
    background: #f4f8fd;
`;

const ResizeGrip = styled.svg`
    position: absolute;
    right: 0;
    bottom: 0;
`;

const Dialog = styled.section`
    position: absolute;
    left: 773px;
    top: 290px;
    width: 734px;
    border: 5px solid #0085b8;
    background: #d6d8d4;
`;

const DialogTitle = styled.div`
    height: 34px;
    display: flex;
    align-items: center;
    justify-content: space-between;
    padding: 0 12px 2px 7px;
    color: #e8ecee;
    background: #101c24;
`;

const DialogTools = styled.div`
    height: 34px;
    display: flex;
    align-items: center;
    gap: 2px;
    padding: 0 22px 2px 9px;
`;

const DialogLabel = styled.label`
    width: 64px;
    color: #4a4a4a;
`;

const DateBox = styled.div`
    width: 101px;
    height: 23px;
    display: flex;
    align-items: center;
    justify-content: space-between;
    border: 1px solid #7d8080;
    color: #777;
    background: ${p => (p.soft ? '#efefef' : '#fff')};
`;

const DateInput = styled.input`
    width: 79px;
    height: 20px;
    margin-left: 1px;
    padding: 0 2px;
    border: 0;
    font-size: 15px;
    background: none;
    ${p => p.selected && css`
        color: #fff;
        background: #3392ff;
    `}
`;

const Tilde = styled.span`
    width: 15px;
    text-align: center;
`;

const DialogGrid = styled.div`
    height: 400px;
    display: flex;
    margin: 0 2px 0 4px;
    border: 1px solid #999c9c;
    border-bottom: 0;
    background: #fff;
`;

const DialogStatus = styled.footer`
    height: 23px;
    display: flex;
    align-items: center;
    justify-content: space-between;
    padding-left: 2px;
    border-top: 1px solid #eee;
`;

const DialogCode = styled.span`
    width: 85px;
    overflow: hidden;
    font-size: 15px;
`;

const TickerWrapper = styled.footer`
    height: 55px;
    flex: none;
    display: flex;
    padding: 1px 3px 1px 0;
    border-top: 3px solid #e8eaee;
    border-bottom: 3px solid #e8eaee;
    font: 15px/18px ${roboto};
    background: #22282c;
`;

const Seoul = styled.div`
    width: 116px;
    display: flex;
    flex-direction: column;
    margin-left: 3px;
    padding: 0 5px;
    border: 2px solid #6bb04a;
    border-radius: 5px;
    background: linear-gradient(#1d5a22, #123d16 48%, #0a260c 52%, #0d3010);
`;

const SeoulRow = styled.div`
    flex: 1;
    display: flex;
    align-items: center;
    gap: 5px;
    font-size: 14px;
    color: ${p => p.tone};
`;

const QuoteGroup = styled.div`
    flex: 1;
    min-width: 0;
    display: grid;
    grid-template-rows: 1fr 1fr;
    gap: 1px;
    margin-left: 3px;
`;

const QuoteRow = styled.div`
    display: grid;
    grid-template-columns: 64px 65px 28px 1fr 24px 136px 14px;
    align-items: center;
    padding: 0 1px;
    color: ${p => (p.down ? '#1e9bff' : '#ff5a0a')};
    background: #000;
    > svg:nth-child(3) { justify-self: center; }
`;

const QuoteName = styled.span`
    width: 64px;
    height: 18px;
    padding-left: 2px;
    line-height: 16px;
    color: #d0d0d0;
    border: 1px solid #262b2e;
    border-radius: 2px;
`;

const QuoteValue = styled.span`
    text-align: right;
    font-size: 14px;
`;

const Change = styled.span`
    padding-left: 6px;
`;

const Candle = styled.svg``;

const Volume = styled.span`
    height: 21px;
    padding-right: 35px;
    line-height: 21px;
    text-align: right;
    border-left: 1px solid #3a3f42;
    ${p => p.tone && `color: ${p.tone};`}
    ${p => p.bar && css`
        background: linear-gradient(90deg, #ea5504 0 28%, #45a012 28% 34%, #0a6fb4 34%);
    `}
`;

const Expand = styled.button`
    width: 12px;
    height: 18px;
    justify-self: end;
    display: flex;
    align-items: center;
    justify-content: center;
    border: 1px solid #2c3135;
    border-radius: 2px;
    background: #000;
`;

const NewsRow = styled.div`
    display: flex;
    align-items: center;
    gap: 5px;
    padding: 0 3px 0 1px;
    color: #c4c4c4;
    background: #000;
`;

const Headline = styled.a`
    flex: 1;
    font-size: 16px;
`;

const Alerts = styled.div`
    width: 74px;
    display: grid;
    grid-template-columns: 1fr 22px;
    grid-template-rows: 1fr 1fr;
    gap: 2px 1px;
    margin-left: 4px;
    margin-right: 1px;
`;

const AlertButton = styled.button`
    display: flex;
    align-items: center;
    justify-content: center;
    border: 1px solid #888;
    font: bold 16px/18px ${mono};
    color: #000;
    background: linear-gradient(#e4e4e4, #b9b9b9);
    ${p => p.full && 'grid-column: 1 / 3;'}
`;

const TaskbarWrapper = styled.footer`
    height: 50px;
    flex: none;
    display: flex;
    align-items: stretch;
    margin: 0 -2px 0 -3px;
    color: #fff;
    background: linear-gradient(90deg, #1f2423 45%, #302624 55%);
`;

const StartButton = styled.button`
    width: 60px;
    padding-left: 20px;
    border: 0;
    background: none;
`;

const SearchBox = styled.label`
    width: 430px;
    display: flex;
    align-items: center;
    gap: 14px;
    padding-left: 14px;
    border: 1px solid #c6c6c6;
    background: #f2f2f2;
`;

const SearchInput = styled.input`
    flex: 1;
    padding: 0;
    border: 0;
    font: 300 21px/24px 'Noto Sans CJK KR', sans-serif;
    background: none;
    &::placeholder { color: #222; }
`;

const TaskButton = styled.button`
    width: ${p => (p.wide ? 61 : 51)}px;
    margin: ${p => (p.wide ? '0 0 0 1px' : '0 5px 0 6px')};
    flex: none;
    display: flex;
    align-items: center;
    justify-content: center;
    border: 0;
    border-bottom: 3px solid ${p => p.line || '#0000'};
    border-top: 3px solid ${p => p.fill || '#0000'};
    background: ${p => p.fill || 'none'};
`;

const Tray = styled.div`
    display: flex;
    align-items: center;
    gap: 11px;
`;

const Ime = styled.span`
    font: 23px/24px ${sans};
`;

const Clock = styled.time`
    margin: 0 23px 0 15px;
    padding-top: 1px;
    text-align: center;
    font: 15px/24px ${roboto};
`;

const ActionCenter = styled.button`
    position: relative;
    width: 45px;
    border: 0;
    border-right: 1px solid #777;
    margin-right: 5px;
    background: none;
`;

const Badge = styled.span`
    position: absolute;
    left: 9px;
    top: 24px;
    width: 21px;
    height: 21px;
    border: 1px solid #999;
    border-radius: 50%;
    font: bold 14px/19px ${sans};
    background: #3a3332;
`;
